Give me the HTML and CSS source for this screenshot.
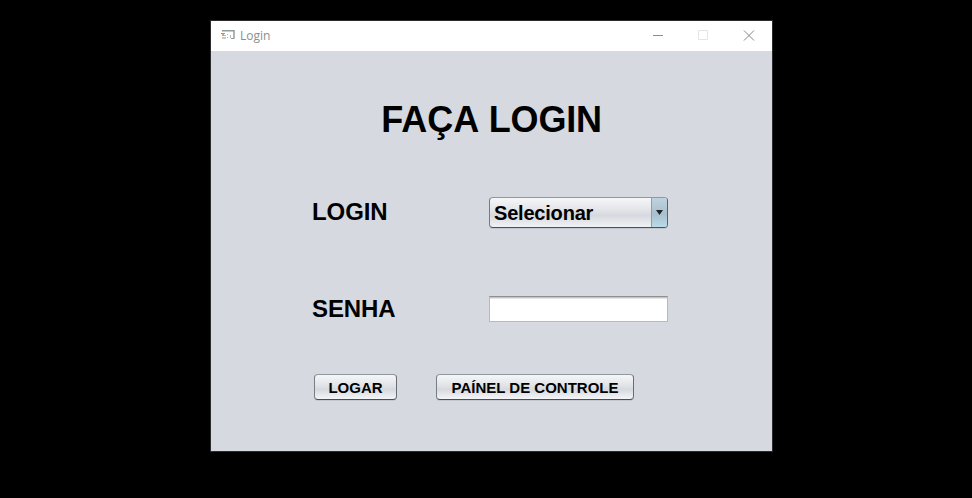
FILE: index.html
```html
<!DOCTYPE html>
<html lang="pt-BR">
<head>
<meta charset="utf-8">
<title>Login</title>
<link rel="stylesheet" href="styles.css">
</head>
<body>
<main class="window">
  <header class="titlebar">
    <svg class="app-icon" width="14" height="10" viewBox="0 0 14 10">
      <path d="M1 .8h12v8" fill="none" stroke="#929e9c" stroke-width="1.500"/>
      <path d="M0 3h4v1H0zM1 7.500h4v1H1zM10 8h3v1h-3z" fill="#929b9a"/>
      <path d="M1 4h2v2H1z" fill="#d8a468"/>
      <path d="M3 5h2v1H3zM6 4h1v1H6zM9 5h1v3H9zM6 7h1v1H6z" fill="#b6bcbd"/>
    </svg>
    <span class="title">Login</span>
    <svg class="controls" width="102" height="11" viewBox="0 0 102 11">
      <path d="M0 5.500h10" stroke="#898d92"/>
      <path d="M45.500 .5h9v9h-9z" fill="none" stroke="#e4e5e8"/>
      <path d="M91 .5l10 10M101 .5l-10 10" stroke="#85888c"/>
    </svg>
  </header>
  <form class="content">
    <h1>FAÇA <span class="second">LOGIN</span></h1>
    <div class="row row-login">
      <label>LOGIN</label>
      <div class="combo">
        <span class="value">Selecionar</span>
        <span class="arrow"><svg width="7" height="5" viewBox="0 0 7 5"><path d="M0 0h7L3.500 5z" fill="#202428"/></svg></span>
      </div>
    </div>
    <div class="row row-password">
      <label for="senha">SENHA</label>
      <input id="senha" type="password">
    </div>
    <div class="actions">
      <button type="button" class="logar">LOGAR</button>
      <button type="button" class="painel">PAÍNEL DE CONTROLE</button>
    </div>
  </form>
</main>
</body>
</html>
```
FILE: styles.css
```css
* { box-sizing: border-box; }
body {
  margin: 0;
  padding: 20px 0 0 210px;
  height: 498px;
  overflow: hidden;
  background: #000;
  color: #000;
  font-family: "Liberation Sans", Arial, sans-serif;
}
.window {
  width: 563px;
  height: 432px;
  border: 1px solid #2b2c2e;
  background: #d6d9e0;
}
.titlebar {
  display: flex;
  align-items: center;
  height: 30px;
  padding: 0 17px 0 10px;
  background: #fff;
}
.app-icon { margin: 0 5px 3px 0; }
.title {
  color: #8b8e92;
  font: 12px/16px "Open Sans", sans-serif;
}
.controls { margin: 0 0 1px auto; }
.content {
  display: flex;
  flex-direction: column;
  padding-top: 48px;
}
h1 {
  margin: 0;
  text-align: center;
  font-size: 36px;
  line-height: 41px;
}
.second {
  margin-left: 1px;
  letter-spacing: -0.2px;
}
.row {
  display: grid;
  grid-template-columns: 177px 179px;
  align-items: center;
  margin-left: 101px;
  font-size: 24px;
  font-weight: bold;
}
.row label {
  padding: 0 0 2px 0;
  letter-spacing: -0.1px;
}
.row-login { height: 31px; margin-top: 57px; }
.row-password {
  grid-template-rows: 26px;
  align-items: start;
  height: 26px;
  margin-top: 68px;
}
.combo {
  display: flex;
  height: 31px;
  border: 1px solid;
  border-color: #8f979f #59626a #4b5156 #737a81;
  border-radius: 4px;
  overflow: hidden;
  background: linear-gradient(#f5f6f8, #e3e5e9 40%, #d6d9df 60%, #f1f2f5);
  box-shadow: 0 1px #c3c7ce;
}
.value {
  flex: 1;
  padding: 1px 0 0 4px;
  font-size: 20px;
  line-height: 29px;
  letter-spacing: -0.2px;
}
.arrow {
  display: flex;
  width: 16px;
  align-items: center;
  justify-content: center;
  border-left: 1px solid #87a1b1;
  background: linear-gradient(#bed3df, #a9c0cd 55%, #b9dbe8);
}
input {
  width: 179px;
  height: 26px;
  border: 1px solid #b6b9be;
  border-top-color: #8d8f93;
  border-radius: 0;
  background: #fff;
  box-shadow: inset 0 1px #c4c5c8, inset 0 2px #e6e6e8;
  outline: 0;
}
.row-password label { margin-top: -1px; }
.actions {
  display: flex;
  gap: 39px;
  margin: 52px 0 0 103px;
}
button {
  height: 26px;
  padding: 1px 0 0;
  border: 1px solid;
  border-color: #8f979f #686d72 #4b4f54 #777d83;
  border-radius: 4px;
  background: linear-gradient(#f5f6f8, #e3e5e9 40%, #d6d9df 60%, #f4f5f8);
  box-shadow: 0 1px #c3c7ce;
  color: #000;
  font: bold 15px/17px "Liberation Sans", Arial, sans-serif;
}
.logar { width: 83px; }
.painel { width: 198px; }
```
